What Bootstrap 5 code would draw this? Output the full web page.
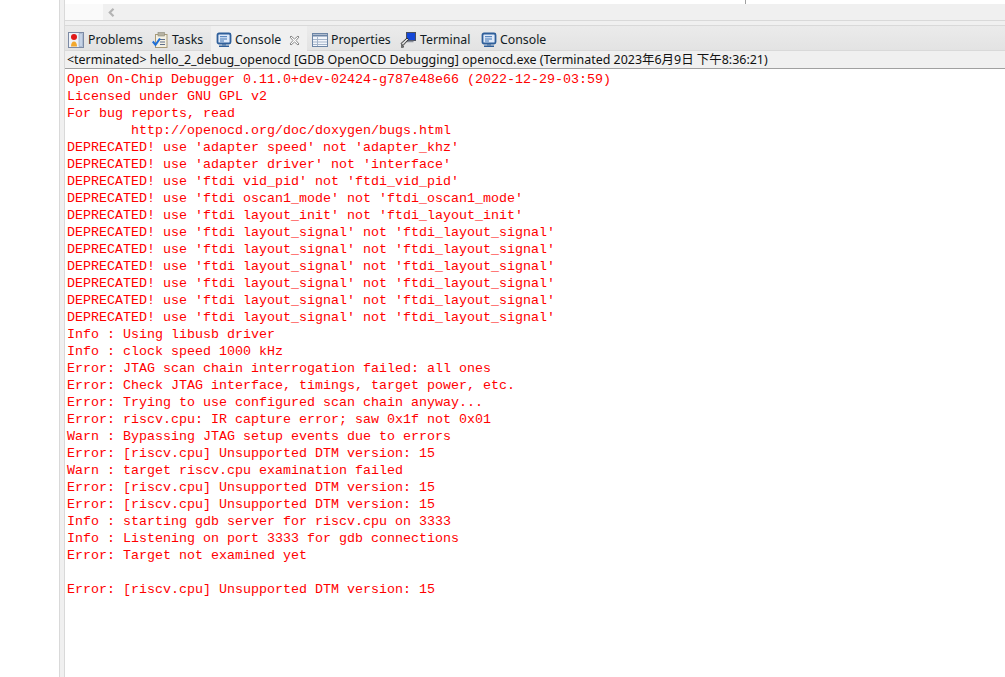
<!DOCTYPE html>
<html lang="en">
<head>
<meta charset="utf-8">
<title>Console</title>
<link href="https://cdn.jsdelivr.net/npm/bootstrap@5.3.0/dist/css/bootstrap.min.css" rel="stylesheet">
<style>
html,body{height:100%;overflow:hidden;background:#fff}
.ide-root{height:677px}
.ide-left{width:59px;background:#fff}
.ide-gutter{width:6px;background:#f0f0f0;border-left:1px solid #d9d9d9;border-right:1px solid #d9d9d9}
.ide-main{width:940px}
.ide-top{height:4px;background:#fff}
.ide-topstub{width:38px;height:4px;overflow:hidden}
.ide-tick{width:1px;height:4px;background:#a0a0a0;margin-left:642px}
.ide-scroll{height:16px;background:#f0f0f0}
.ide-scrollcap{width:38px;background:#fafafa}
.ide-arrow{margin-left:5px}
.ide-gap{height:6px;background:#f0f0f0;border-top:1px solid #d9d9d9;border-bottom:1px solid #d9d9d9}
.ide-tabs{height:25px;background:linear-gradient(#ebebeb,#e3e3e3);border-bottom:1px solid #d9d9d9;font:12.3px/1 "Noto Sans","Open Sans",sans-serif;color:#111b24}
.ide-tab{height:24px;padding-top:4px;white-space:nowrap}
.ide-tab svg{flex:none}
.ide-active{background:#f0f0f0;height:25px;padding-bottom:1px}
.tab-problems{width:83px;padding-left:3px;column-gap:4px}
.tab-tasks{width:63px;padding-left:4px;column-gap:4px}
.tab-console{width:96px;padding-left:5px;column-gap:3px}
.tab-props{width:88px;padding-left:5px;column-gap:3px}
.tab-term{width:81px;padding-left:5px;column-gap:4px}
.tab-out{width:80px;padding-left:5px;column-gap:3px}
.tab-close{margin-left:5px}
.ide-status{height:18px;background:#f0f0f0;border-bottom:1px solid #a0a0a0;font:12.45px/17px "Noto Sans","Noto Sans CJK SC",sans-serif;color:#111;padding-left:2px;white-space:nowrap}
.ide-console{margin:2px 0 0 2px;font:13.33px/17px "Liberation Mono","Courier New",monospace;color:#f00;white-space:pre;background:transparent;padding:0;overflow:visible}
</style>
</head>
<body class="m-0">
<svg width="0" height="0" class="d-block" aria-hidden="true">
  <symbol id="ico-console" viewBox="0 0 16 16"><rect x="1.500" y="1.500" width="13" height="10" rx="1.500" fill="#dfeafa" stroke="#2f5f9a" stroke-width="1.800"/><path d="M4 4.700h7M4 7h7M4 9h4" stroke="#3f74b4"/><path d="M6 12h4v1.500H6z" fill="#5a7ea8"/><path d="M3 13.500h10V15H3z" fill="#2f5f9a"/></symbol>
</svg>
<div class="ide-root d-flex">
  <div class="ide-left"></div>
  <div class="ide-gutter"></div>
  <div class="ide-main d-flex flex-column">
    <div class="ide-top d-flex">
      <div class="ide-topstub">
        <svg width="38" height="4" viewBox="0 0 38 4"><rect x="0" y="0" width="12" height="3" fill="#8fb4e8"/><path d="M1 0v3M4 0v3M7 0v3M10 0v3" stroke="#fff"/><circle cx="23" cy="1" r="2.500" fill="none" stroke="#b8a8a0"/></svg>
      </div>
      <div class="ide-tick"></div>
    </div>
    <div class="ide-scroll d-flex align-items-center">
      <div class="ide-scrollcap align-self-stretch"></div>
      <svg class="ide-arrow" width="7" height="9" viewBox="0 0 7 9"><path d="M5.500.8 1.800 4.500l3.700 3.700" fill="none" stroke="#b4b4b4" stroke-width="2.200"/></svg>
    </div>
    <div class="ide-gap"></div>
    <div class="ide-tabs d-flex align-items-start">
      <div class="ide-tab tab-problems d-flex align-items-center">
        <svg width="16" height="16" viewBox="0 0 16 16"><rect x=".5" y=".5" width="15" height="15" fill="#eef2f8" stroke="#7c8aa4"/><path d="M11 1.500h3.500v13H11z" fill="#c6d3e6" stroke="#8fa2bf" stroke-width=".6"/><circle cx="6" cy="5" r="3" fill="#e01818"/><path d="M3 14.500c0-3 1-5 3-5s3 2 3 5z" fill="#f2a82e"/></svg>
        <span>Problems</span>
      </div>
      <div class="ide-tab tab-tasks d-flex align-items-center">
        <svg width="16" height="16" viewBox="0 0 16 16"><rect x="3.500" y="2.500" width="11.500" height="13" fill="#f4f1e4" stroke="#a89a78"/><rect x="6" y=".5" width="6.500" height="3.500" fill="#b6b2a2" stroke="#8d8a7a" stroke-width=".6"/><path d="M8 7.500h5M8 10h5M8 12.500h5" stroke="#5f6f8a"/><path d="M.8 9.500l2.700 3.300L8 6.500" fill="none" stroke="#1f6fd6" stroke-width="2.100"/></svg>
        <span>Tasks</span>
      </div>
      <div class="ide-tab ide-active tab-console d-flex align-items-center">
        <svg width="16" height="16"><use href="#ico-console"/></svg>
        <span>Console</span>
        <svg class="tab-close" width="11" height="11" viewBox="0 0 11 11"><path d="M1 2 2 1l3.500 3L9 1l1 1-3 3.500 3 3.500-1 1-3.500-3L2 10 1 9l3-3.500z" fill="#fff" stroke="#8a8a8a"/></svg>
      </div>
      <div class="ide-tab tab-props d-flex align-items-center">
        <svg width="16" height="16" viewBox="0 0 16 16"><rect x=".5" y="1.500" width="15" height="13" fill="#f3f6fb" stroke="#6c85a5"/><path d="M1 3.500h14" stroke="#6c85a5" stroke-width="2"/><path d="M5.500 5v9M1 7.500h14M1 10h14M1 12.500h14" stroke="#a5b5ca"/></svg>
        <span>Properties</span>
      </div>
      <div class="ide-tab tab-term d-flex align-items-center">
        <svg width="16" height="16" viewBox="0 0 16 16"><rect x="6.500" y=".5" width="9" height="8" fill="#1447d8" stroke="#4a5060"/><path d="M6.500 9.500h7" stroke="#8a8f99" stroke-width="1.500"/><path d="M1 11.500l6-5.500 1.500 1.500-5.500 6z" fill="#d8d8d8" stroke="#333"/><path d="M1.500 12.500l2.500 2.500-2.500.7z" fill="#777" stroke="#444" stroke-width=".6"/></svg>
        <span>Terminal</span>
      </div>
      <div class="ide-tab tab-out d-flex align-items-center">
        <svg width="16" height="16"><use href="#ico-console"/></svg>
        <span>Console</span>
      </div>
    </div>
    <div class="ide-status">&lt;terminated&gt; hello_2_debug_openocd [GDB OpenOCD Debugging] openocd.exe (Terminated 2023年6月9日 下午8:36:21)</div>
    <pre class="ide-console">Open On-Chip Debugger 0.11.0+dev-02424-g787e48e66 (2022-12-29-03:59)
Licensed under GNU GPL v2
For bug reports, read
	http://openocd.org/doc/doxygen/bugs.html
DEPRECATED! use 'adapter speed' not 'adapter_khz'
DEPRECATED! use 'adapter driver' not 'interface'
DEPRECATED! use 'ftdi vid_pid' not 'ftdi_vid_pid'
DEPRECATED! use 'ftdi oscan1_mode' not 'ftdi_oscan1_mode'
DEPRECATED! use 'ftdi layout_init' not 'ftdi_layout_init'
DEPRECATED! use 'ftdi layout_signal' not 'ftdi_layout_signal'
DEPRECATED! use 'ftdi layout_signal' not 'ftdi_layout_signal'
DEPRECATED! use 'ftdi layout_signal' not 'ftdi_layout_signal'
DEPRECATED! use 'ftdi layout_signal' not 'ftdi_layout_signal'
DEPRECATED! use 'ftdi layout_signal' not 'ftdi_layout_signal'
DEPRECATED! use 'ftdi layout_signal' not 'ftdi_layout_signal'
Info : Using libusb driver
Info : clock speed 1000 kHz
Error: JTAG scan chain interrogation failed: all ones
Error: Check JTAG interface, timings, target power, etc.
Error: Trying to use configured scan chain anyway...
Error: riscv.cpu: IR capture error; saw 0x1f not 0x01
Warn : Bypassing JTAG setup events due to errors
Error: [riscv.cpu] Unsupported DTM version: 15
Warn : target riscv.cpu examination failed
Error: [riscv.cpu] Unsupported DTM version: 15
Error: [riscv.cpu] Unsupported DTM version: 15
Info : starting gdb server for riscv.cpu on 3333
Info : Listening on port 3333 for gdb connections
Error: Target not examined yet

Error: [riscv.cpu] Unsupported DTM version: 15</pre>
  </div>
</div>
<script src="https://cdn.jsdelivr.net/npm/bootstrap@5.3.0/dist/js/bootstrap.bundle.min.js"></script>
</body>
</html>
